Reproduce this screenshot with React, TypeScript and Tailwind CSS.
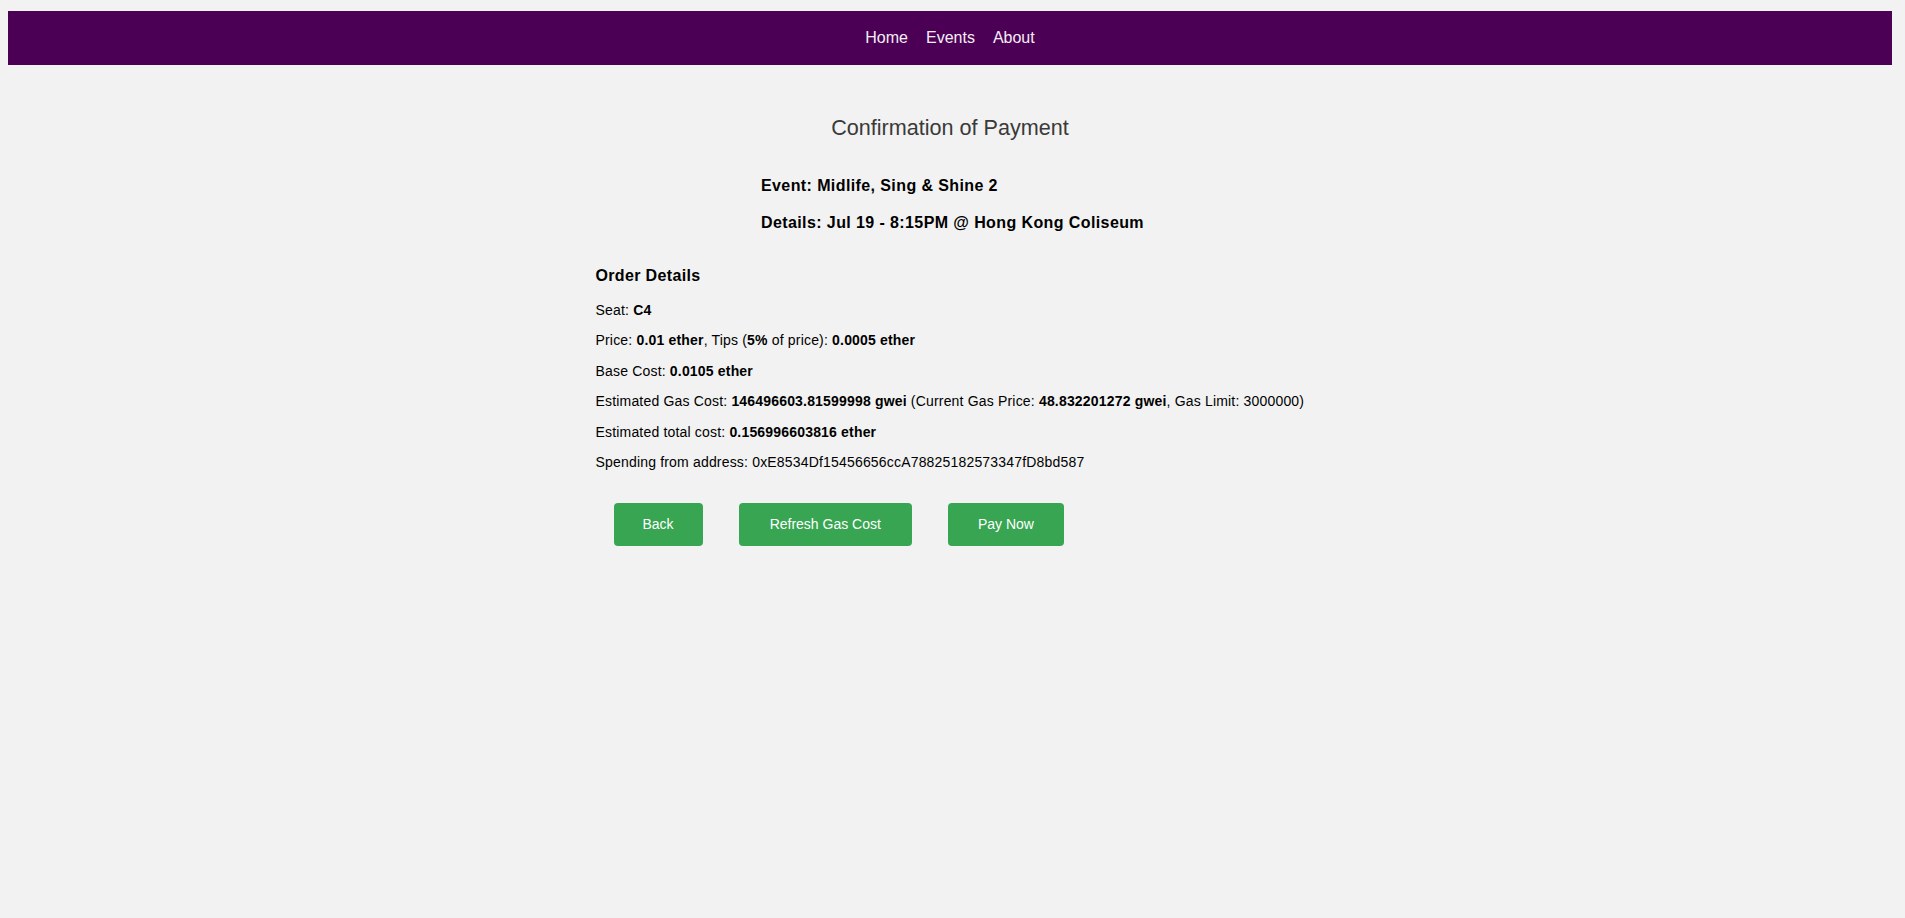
import React from "react";

export default function App() {
  return (
    <div className="min-h-screen bg-[#f2f2f2] pt-[11px] font-['Liberation_Sans',Arial,sans-serif] text-black">
      <nav className="ml-[8px] w-[1884px] h-[54px] bg-[#4b0055] flex justify-center items-center gap-[18px] text-[16px] text-[#f4eef4]">
        <a>Home</a>
        <a>Events</a>
        <a>About</a>
      </nav>
      <h1 className="mt-[50px] pr-[5px] text-center text-[21.6px] leading-[26px] text-[#3a3a3a]">
        Confirmation of Payment
      </h1>
      <div className="flex justify-center mt-[35px]">
        <div className="font-bold text-[16px] leading-[20px] tracking-[0.4px]">
          <p>Event: Midlife, Sing &amp; Shine 2</p>
          <p className="mt-[17px]">Details: Jul 19 - 8:15PM @ Hong Kong Coliseum</p>
        </div>
      </div>
      <div className="mx-auto w-[714px] mt-[33px]">
        <h2 className="font-bold text-[16px] leading-[20px] tracking-[0.35px]">Order Details</h2>
        <div className="mt-[9px] text-[14px] leading-[30.4px] tracking-[0.18px] whitespace-nowrap">
          <p>
            Seat: <b>C4</b>
          </p>
          <p>
            Price: <b>0.01 ether</b>, Tips (<b>5%</b> of price): <b>0.0005 ether</b>
          </p>
          <p>
            Base Cost: <b>0.0105 ether</b>
          </p>
          <p>
            Estimated Gas Cost: <b>146496603.81599998 gwei</b> (Current Gas Price: <b>48.832201272 gwei</b>, Gas Limit: 3000000)
          </p>
          <p>
            Estimated total cost: <b>0.156996603816 ether</b>
          </p>
          <p>Spending from address: 0xE8534Df15456656ccA78825182573347fD8bd587</p>
        </div>
        <div className="mt-[26px] flex gap-[36px] pl-[18px]">
          <button className="h-[43px] px-[29px] rounded-[4px] bg-[#37a551] text-white text-[14px]">Back</button>
          <button className="h-[43px] px-[31px] rounded-[4px] bg-[#37a551] text-white text-[14px]">Refresh Gas Cost</button>
          <button className="h-[43px] px-[30px] rounded-[4px] bg-[#37a551] text-white text-[14px]">Pay Now</button>
        </div>
      </div>
    </div>
  );
}
